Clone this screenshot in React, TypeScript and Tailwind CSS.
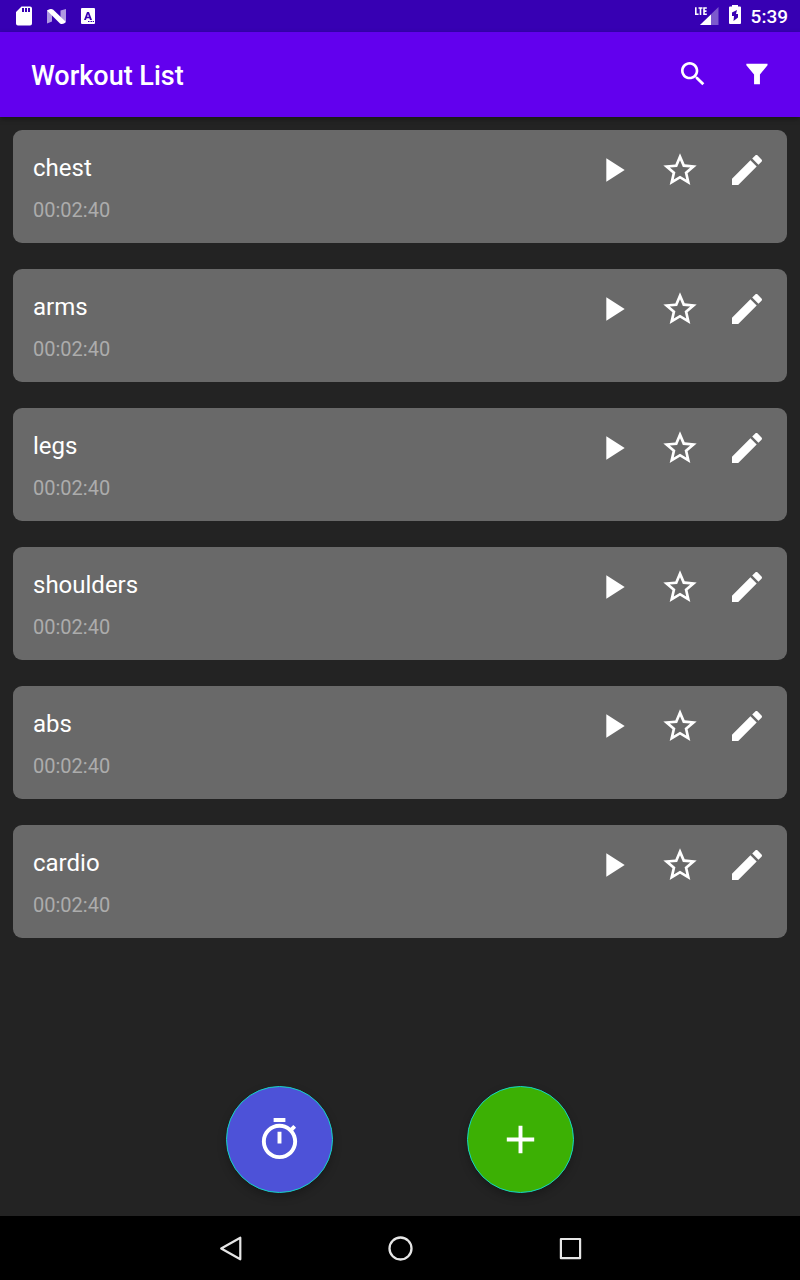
import React from "react";

type IconProps = { path: string; className: string };

function Icon({ path, className }: IconProps) {
  return (
    <svg viewBox="0 0 24 24" className={className} fill="currentColor" aria-hidden="true">
      <path d={path} />
    </svg>
  );
}

const icons = {
  search:
    "M15.5 14h-.79l-.28-.27C15.41 12.59 16 11.11 16 9.5 16 5.91 13.09 3 9.5 3S3 5.91 3 9.5 5.91 16 9.5 16c1.61 0 3.09-.59 4.23-1.57l.27.28v.79l5 4.99L20.49 19l-4.99-5zm-6 0C7.01 14 5 11.99 5 9.5S7.01 5 9.5 5 14 7.01 14 9.5 11.99 14 9.5 14z",
  filter: "M4 4.3H19.9V5.4L14.2 12.4V19.6H9.8V12.4L4 5.4Z",
  play: "M8 5v14l11-7z",
  star: "M22 9.24l-7.19-.62L12 2 9.19 8.63 2 9.24l5.46 4.73L5.82 21 12 17.27 18.18 21l-1.63-7.03L22 9.24zM12 15.4l-3.76 2.27 1-4.28-3.32-2.88 4.38-.38L12 6.1l1.71 4.04 4.38.38-3.32 2.88 1 4.28L12 15.4z",
  edit: "M3 17.25V21h3.75L17.81 9.94l-3.75-3.75L3 17.25zM20.71 7.04c.39-.39.39-1.02 0-1.41l-2.34-2.34c-.39-.39-1.02-.39-1.41 0l-1.83 1.83 3.75 3.75 1.83-1.83z",
  timer:
    "M15 1H9v2h6V1zm-4 13h2V8h-2v6zm8.03-6.61l1.42-1.42c-.43-.51-.9-.99-1.41-1.41l-1.42 1.42C16.07 4.74 14.12 4 12 4c-4.97 0-9 4.03-9 9s4.02 9 9 9 9-4.03 9-9c0-2.12-.74-4.07-1.97-5.61zM12 20c-3.87 0-7-3.13-7-7s3.13-7 7-7 7 3.13 7 7-3.13 7-7 7z",
  add: "M19 13h-6v6h-2v-6H5v-2h6V5h2v6h6v2z",
};

const workouts = [
  { name: "chest", time: "00:02:40" },
  { name: "arms", time: "00:02:40" },
  { name: "legs", time: "00:02:40" },
  { name: "shoulders", time: "00:02:40" },
  { name: "abs", time: "00:02:40" },
  { name: "cardio", time: "00:02:40" },
];

function StatusBar() {
  return (
    <div className="flex h-8 items-center justify-between bg-[#3700b3] pr-3 pl-4">
      <div className="flex items-center gap-3">
        <svg viewBox="0 0 16 20" className="h-5 w-4" aria-hidden="true">
          <path
            fill="#fff"
            fillRule="evenodd"
            d="M5.5 0.5H14Q16 0.5 16 2.5V17.5Q16 19.5 14 19.5H2Q0 19.5 0 17.5V6ZM6 2V6H8V2ZM9 2V6H11V2ZM12 2V6H14V2Z"
          />
        </svg>
        <svg viewBox="0 0 24 20" className="h-5 w-6" aria-hidden="true">
          <path fill="#fff" opacity="0.6" d="M3 4.5L8 3V15.5L3 17.5ZM16.5 4.5L22 3V15.5L16.5 17Z" />
          <path fill="#fff" d="M3 4.5Q6 2 9 3.5L22 16Q19 19 16 17.5Z" />
        </svg>
        <svg viewBox="0 0 16 20" className="h-5 w-4" aria-hidden="true">
          <rect x="1" y="2" width="14" height="16" rx="1" fill="#fff" />
          <path
            fill="#3700b3"
            fillRule="evenodd"
            d="M7 6H9L12 14H10L9.4 12.3H6.6L6 14H4ZM8 8L7.1 10.8H8.9ZM8 15H9.5V16H8ZM10.5 15H12V16H10.5ZM12.7 15H14V16H12.7Z"
          />
        </svg>
      </div>
      <div className="flex items-center gap-2.5 text-white">
        <svg viewBox="0 0 24 20" className="h-5 w-6" aria-hidden="true">
          <path fill="#fff" opacity="0.35" d="M23.5 1V19H5Z" />
          <path fill="#fff" d="M16 8.5V19H5Z" />
          <path
            fill="none"
            stroke="#fff"
            strokeWidth="1.6"
            d="M0.8 1.3V8.2H3.6M3.5 2H7.5M5.5 2V9M11.8 2H9V8.2H11.8M9 5.1H11.5"
          />
        </svg>
        <svg viewBox="0 0 12 22" className="h-5.5 w-3" aria-hidden="true">
          <path
            fill="#fff"
            fillRule="evenodd"
            d="M3 0H9V1.500H11Q12 1.500 12 2.500V18Q12 19 11 19H1Q0 19 0 18V2.500Q0 1.500 1 1.500H3ZM8 5L3 7.500V11H5L4.500 16L9 12.500V9H7Z"
          />
        </svg>
        <span className="pt-0.5 text-[19px] leading-6 font-medium">5:39</span>
      </div>
    </div>
  );
}

function WorkoutCard({ name, time }: { name: string; time: string }) {
  return (
    <li className="flex items-start justify-between rounded-[9px] bg-[#696969] p-5">
      <div className="min-w-0">
        <h2 className="text-2xl leading-9 text-white">{name}</h2>
        <p className="mt-3 text-[20px] leading-[25px] text-[#acacac]">{time}</p>
      </div>
      <div className="flex shrink-0 gap-[27px] text-white">
        <button type="button" aria-label={`Start ${name}`}>
          <Icon path={icons.play} className="size-10" />
        </button>
        <button type="button" aria-label={`Favourite ${name}`}>
          <Icon path={icons.star} className="size-10" />
        </button>
        <button type="button" aria-label={`Edit ${name}`}>
          <Icon path={icons.edit} className="size-10" />
        </button>
      </div>
    </li>
  );
}

export default function App() {
  return (
    <div className="flex min-h-screen flex-col bg-[#232323] font-['Roboto',sans-serif]">
      <StatusBar />
      <header className="flex h-[85px] items-center justify-between bg-[#6200ee] pr-[27px] pl-[31px] text-white shadow-[0_2px_5px_rgba(0,0,0,0.35)]">
        <h1 className="pt-0.5 text-[27px] leading-9 font-medium">Workout List</h1>
        <div className="flex gap-8 pb-0.5">
          <button type="button" aria-label="Search">
            <Icon path={icons.search} className="size-8" />
          </button>
          <button type="button" aria-label="Filter">
            <Icon path={icons.filter} className="size-8" />
          </button>
        </div>
      </header>
      <main className="flex flex-1 flex-col justify-between">
        <ul className="flex flex-col gap-[26px] p-[13px]">
          {workouts.map((w) => (
            <WorkoutCard key={w.name} name={w.name} time={w.time} />
          ))}
        </ul>
        <div className="flex justify-center gap-[134px] pb-[23px] text-white">
          <button
            type="button"
            aria-label="Timer"
            className="flex size-[107px] items-center justify-center rounded-full border border-[#14d4c4] bg-[#4d52d8] shadow-[0_4px_8px_rgba(0,0,0,0.25)]"
          >
            <Icon path={icons.timer} className="size-[47px]" />
          </button>
          <button
            type="button"
            aria-label="Add workout"
            className="flex size-[107px] items-center justify-center rounded-full border border-[#14d4c4] bg-[#3cb004] shadow-[0_4px_8px_rgba(0,0,0,0.25)]"
          >
            <Icon path={icons.add} className="size-[47px]" />
          </button>
        </div>
      </main>
      <nav className="flex h-16 items-center justify-center gap-[138px] bg-black text-[#e6e6e6]">
        <button type="button" aria-label="Back">
          <svg viewBox="0 0 32 32" className="size-8" fill="none" stroke="currentColor" strokeWidth="2.2" strokeLinejoin="round" aria-hidden="true">
            <path d="M26.3 5.7V27.3L7.2 16.5Z" />
          </svg>
        </button>
        <button type="button" aria-label="Home">
          <svg viewBox="0 0 32 32" className="size-8" fill="none" stroke="currentColor" strokeWidth="2.3" aria-hidden="true">
            <circle cx="16.5" cy="16.5" r="11" />
          </svg>
        </button>
        <button type="button" aria-label="Overview">
          <svg viewBox="0 0 32 32" className="size-8" fill="none" stroke="currentColor" strokeWidth="2.2" strokeLinejoin="round" aria-hidden="true">
            <rect x="6.9" y="7" width="19.2" height="19.2" />
          </svg>
        </button>
      </nav>
    </div>
  );
}
